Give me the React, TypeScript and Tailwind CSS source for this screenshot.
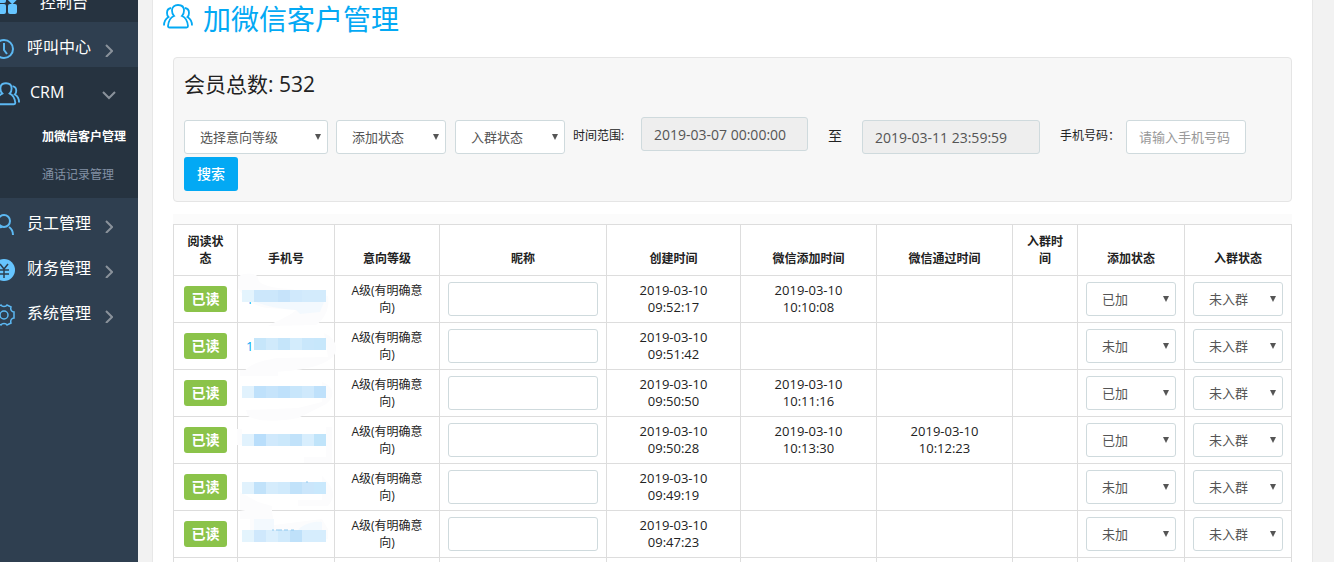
import React from 'react';

const menuIcon = 'shrink-0 fill-none stroke-[#5cb8f2] stroke-2';

const GridIcon = () => (
  <svg width="26" height="24" viewBox="0 0 26 24" className="shrink-0 fill-[#66c5ff]">
    <rect x="4" y="2" width="10" height="9" rx="2" />
    <rect x="4" y="12" width="10" height="10" rx="2" />
    <rect x="16" y="12" width="9" height="10" rx="2" />
    <rect x="17" y="3" width="8" height="8" rx="1" transform="rotate(45 21 6)" />
  </svg>
);

const ClockIcon = () => (
  <svg width="24" height="24" viewBox="0 0 24 24" className={menuIcon}>
    <circle cx="12" cy="12" r="9" />
    <path d="M12 6v7l3 4" />
  </svg>
);

const TeamPaths = () => (
  <>
    <path d="M11 12C9.5 10.500 9 8.500 9 6.500 9 3 11.500 1 15 1s6 2 6 5.500c0 2-.5 4-2 5.500 3.500 1.500 5.500 5 6 10 0 1-.5 1.500-1.500 1.500h-17C5.500 23.500 5 23 5 22c.5-5 2.500-8.500 6-10z" />
    <path d="M8 4C5 4.500 4 6.500 4 9c0 1.500.5 3 1.500 4C3 14.500 1 18 1 21.500" />
    <path d="M22 4c3 .5 4 2.500 4 5 0 1.500-.5 3-1.500 4 2.500 1.500 4.500 5 4.500 8.500" />
  </>
);

const TeamIcon = () => (
  <svg width="28" height="24" viewBox="0 0 30 25" className={menuIcon}>
    <TeamPaths />
  </svg>
);

const UserIcon = () => (
  <svg width="24" height="24" viewBox="0 0 24 24" className={menuIcon}>
    <circle cx="12" cy="8" r="6" />
    <path d="M3 21c0-4 3-7 7-7M17 14c3 2 4 4 4 8" />
  </svg>
);

const YenIcon = () => (
  <svg width="24" height="24" viewBox="0 0 24 24" className="shrink-0">
    <circle cx="12" cy="12" r="11" className="fill-[#66c5ff]" />
    <path d="M8 6l4 5 4-5M12 11v9M7 12h10M7 16h10" className="fill-none stroke-[#2c3e50]" strokeWidth="1.5" />
  </svg>
);

const GearIcon = () => (
  <svg width="24" height="24" viewBox="0 0 24 24" className="shrink-0 fill-none stroke-[#5cb8f2]" strokeWidth="1.5">
    <circle cx="12" cy="12" r="4" />
    <path d="M9 2c1 2 5 2 6 0l4 2c-1 3 1 5 3 5v6c-2 0-4 2-3 5l-4 2c-1-2-5-2-6 0l-4-2c1-3-1-5-3-5V9c2 0 4-2 3-5z" />
  </svg>
);

const ChevronRight = () => (
  <svg width="8" height="16" viewBox="0 0 8 16" className="fill-none stroke-[#8a929b] stroke-2">
    <path d="M1 4l6 6-6 6" />
  </svg>
);

const ChevronDown = () => (
  <svg width="14" height="16" viewBox="0 0 14 16" className="fill-none stroke-[#8a929b] stroke-2">
    <path d="M1 6l6 6 6-6" />
  </svg>
);

type MenuItemProps = {
  icon: React.ReactNode;
  label: string;
  className?: string;
  arrow?: React.ReactNode;
};

const MenuItem = ({ icon, label, className = 'gap-[11px] pr-[25px]', arrow }: MenuItemProps) => (
  <a href="#" className={`-ml-2 flex h-[45px] items-center pt-2 text-base text-white ${className}`}>
    {icon}
    <span className="flex-1 pb-[3px]">{label}</span>
    {arrow}
  </a>
);

const Sidebar = () => (
  <nav className="w-[138px] shrink-0 overflow-hidden bg-[#2f3f50]">
    <div className="-mt-[23px] bg-[#263340]">
      <MenuItem icon={<GridIcon />} label="控制台" className="gap-[22px]" />
    </div>
    <MenuItem icon={<ClockIcon />} label="呼叫中心" arrow={<ChevronRight />} />
    <div className="bg-[#263340] pb-1">
      <MenuItem icon={<TeamIcon />} label="CRM" className="gap-[10px] pr-[22px]" arrow={<ChevronDown />} />
      <ul className="pt-[6px] text-xs leading-[38px]">
        <li>
          <a href="#" className="block pl-[42px] font-bold whitespace-nowrap text-white">加微信客户管理</a>
        </li>
        <li>
          <a href="#" className="block pl-[42px] whitespace-nowrap text-[#8391a5]">通话记录管理</a>
        </li>
      </ul>
    </div>
    <MenuItem icon={<UserIcon />} label="员工管理" arrow={<ChevronRight />} />
    <MenuItem icon={<YenIcon />} label="财务管理" arrow={<ChevronRight />} />
    <MenuItem icon={<GearIcon />} label="系统管理" arrow={<ChevronRight />} />
  </nav>
);

type SelectProps = {
  label: string;
  value: string;
  options: string[];
  className: string;
};

const Select = ({ label, value, options, className }: SelectProps) => (
  <div className={`relative ${className}`}>
    <select
      aria-label={label}
      defaultValue={value}
      className="block h-[34px] w-full appearance-none rounded-[3px] border border-[#cfdadd] bg-white pt-px pl-[15px] text-[13px] text-[#555]"
    >
      {options.map((option) => (
        <option key={option}>{option}</option>
      ))}
    </select>
    <svg width="6" height="6" viewBox="0 0 6 6" className="pointer-events-none absolute top-[14px] right-[7px] fill-[#555]">
      <path d="M0 0h6L3 6z" />
    </svg>
  </div>
);

const field = 'block h-[34px] rounded-[3px] border border-[#cfdadd] px-3 text-[#555]';

const Filters = () => (
  <form className="rounded border border-[#e5e5e5] bg-[#f7f7f7] p-[10px]">
    <h3 className="text-[21px] leading-8 text-[#222]">会员总数: 532</h3>
    <div className="mt-[17px] flex h-[37px] items-end">
      <Select label="选择意向等级" value="选择意向等级" options={['选择意向等级']} className="mr-2 w-36" />
      <Select label="添加状态" value="添加状态" options={['添加状态', '已加', '未加']} className="mr-[9px] w-[110px]" />
      <Select label="入群状态" value="入群状态" options={['入群状态', '未入群']} className="mr-2 w-[110px]" />
      <label htmlFor="start" className="mr-4 w-[52px] self-center whitespace-nowrap">时间范围:</label>
      <input id="start" readOnly defaultValue="2019-03-07 00:00:00" className={`${field} w-[167px] self-start bg-[#eee] text-sm`} />
      <label htmlFor="end" className="mx-5 self-center text-sm">至</label>
      <input id="end" readOnly defaultValue="2019-03-11 23:59:59" className={`${field} w-[178px] bg-[#eee] text-sm`} />
      <label htmlFor="phone" className="ml-5 w-[66px] self-center whitespace-nowrap">手机号码：</label>
      <input id="phone" placeholder="请输入手机号码" className={`${field} w-[120px] bg-white text-[13px] placeholder:text-[#999]`} />
    </div>
    <button type="button" className="mt-[3px] block h-[34px] rounded-[3px] bg-[#03a9f4] px-[13px] text-sm font-medium text-white">
      搜索
    </button>
  </form>
);

// coordinates start at the top left corner of the phone cell
const masks = [
  {
    first: '1',
    y: 14,
    fills: ['#e4f4fd', '#cce7fb', '#cce7fb', '#c6e3fa', '#d0e9fc', '#d3ebfc', '#d3ebfc'],
    smear: 'M0 2C0-3 20-4 20 2C20 9 34 12 52 13L90 20C92 30 88 42 78 49L30 50C40 44 52 40 58 34L30 32C14 30 6 22 0 12Z',
    tint: 'M18 26C30 31 44 33 58 34L62 38 82 36 86 26Z',
  },
  {
    first: '1',
    y: 15,
    fills: ['', '#c6e6fa', '#d0eafb', '#c5e5fa', '#d3ecfc', '#c9e7fb', '#c7e7fb'],
    smear: 'M86 10C96 14 102 24 95 34C82 44 70 48 4 51C10 42 20 38 40 35L90 34Z',
  },
  {
    y: 16,
    fills: ['#e1f2fd', '#bfe1fb', '#c6e4fb', '#bfe1fb', '#c8e6fb', '#cfe9fc', '#bfe1fb'],
    smear: 'M2 0H40V6H2ZM84 12C96 16 98 26 88 34L60 48C40 52 20 52 10 46L8 40L60 38L84 32Z',
  },
  {
    y: 17,
    fills: ['#e1f2fd', '#b9defb', '#d0e9fc', '#cbe8fb', '#c1e2fa', '#d8eefd', '#c0e4fa'],
    smear: 'M-1 12H4V28H-1ZM88 10H94V46H66V40H88Z',
  },
  {
    y: 18,
    fills: ['#e1f2fd', '#c1e2fa', '#d5ecfc', '#d0eafc', '#c1e2fa', '#cbe6fb', '#c9e8fc'],
    smear: 'M84 12C94 22 100 30 90 42H60V36H84ZM2 28V46L34 52V42L20 38Z',
    dots: 'M68 18h2',
  },
  {
    y: 19,
    fills: ['#e4f4fd', '#cfe8fc', '#dbeffd', '#d0eafc', '#bfe1fa', '#d6edfd', '#d6edfd'],
    smear: 'M2 0H34L36 14L84 8L90 18V28H84V19H12V8H2Z',
    tint: 'M16 8H36V19H16ZM60 19C66 12 78 10 84 11V19Z',
    dots: 'M34 19h2m2 0h6m2 0h4m3 0h3',
  },
];

const rows = [
  { created: ['2019-03-10', '09:52:17'], added: ['2019-03-10', '10:10:08'], passed: [], status: '已加' },
  { created: ['2019-03-10', '09:51:42'], added: [], passed: [], status: '未加' },
  { created: ['2019-03-10', '09:50:50'], added: ['2019-03-10', '10:11:16'], passed: [], status: '已加' },
  { created: ['2019-03-10', '09:50:28'], added: ['2019-03-10', '10:13:30'], passed: ['2019-03-10', '10:12:23'], status: '已加' },
  { created: ['2019-03-10', '09:49:19'], added: [], passed: [], status: '未加' },
  { created: ['2019-03-10', '09:47:23'], added: [], passed: [], status: '未加' },
];

const columns = [
  { title: '阅读状态', width: 'w-[64px]' },
  { title: '手机号', width: 'w-[97px]' },
  { title: '意向等级', width: 'w-[105px]' },
  { title: '昵称', width: 'w-[167px]' },
  { title: '创建时间', width: 'w-[134px]' },
  { title: '微信添加时间', width: 'w-[136px]' },
  { title: '微信通过时间', width: 'w-[136px]' },
  { title: '入群时间', width: 'w-[65px]' },
  { title: '添加状态', width: 'w-[107px]' },
  { title: '入群状态', width: 'w-[107px]' },
];

const cell = 'border border-[#ddd] px-2 py-[6px]';

const DateCell = ({ parts }: { parts: string[] }) => (
  <td className={`${cell} text-[13px]`}>
    {parts.map((part) => (
      <span key={part} className="block">{part}</span>
    ))}
  </td>
);

const PhoneCell = ({ mask }: { mask: (typeof masks)[number] }) => (
  <td className={`${cell} relative text-left`}>
    <a href="#" className="text-[13px] text-[#03a9f4]">{mask.first}</a>
    <svg width="97" height="47" viewBox="0 0 97 47" className="pointer-events-none absolute top-0 left-0 overflow-visible">
      <path d={mask.smear} className="fill-[#fcfcfd]" />
      {mask.tint && <path d={mask.tint} className="fill-[#f3f9fe]" />}
      {mask.fills.map((fill, i) =>
        fill ? <rect key={i} x={4 + i * 12} y={mask.y} width="12" height="12" fill={fill} /> : null
      )}
      {mask.dots && <path d={mask.dots} className="stroke-[#8fc8ee]" />}
    </svg>
  </td>
);

const MemberTable = () => (
  <table className="w-full table-fixed border-collapse text-center leading-[17px]">
    <colgroup>
      {columns.map((column) => (
        <col key={column.title} className={column.width} />
      ))}
    </colgroup>
    <thead>
      <tr>
        {columns.map((column) => (
          <th key={column.title} className="border border-[#ddd] px-3 py-2 align-bottom font-bold">{column.title}</th>
        ))}
      </tr>
    </thead>
    <tbody>
      {rows.map((row, i) => (
        <tr key={row.created[1]} className="h-[47px]">
          <td className={cell}>
            <button type="button" className="h-[26px] w-[43px] rounded-[3px] bg-[#8bc34a] text-sm font-bold text-white">
              已读
            </button>
          </td>
          <PhoneCell mask={masks[i]} />
          <td className={cell}>
            A级(有明确意
            <br />
            向)
          </td>
          <td className={cell}>
            <input aria-label="昵称" className={`${field} w-full bg-white text-[13px]`} />
          </td>
          <DateCell parts={row.created} />
          <DateCell parts={row.added} />
          <DateCell parts={row.passed} />
          <td className={cell}></td>
          <td className={cell}>
            <Select label="添加状态" value={row.status} options={['已加', '未加']} className="w-full" />
          </td>
          <td className={cell}>
            <Select label="入群状态" value="未入群" options={['未入群']} className="w-full" />
          </td>
        </tr>
      ))}
      <tr className="h-[47px]">
        {columns.map((column) => (
          <td key={column.title} className={cell}></td>
        ))}
      </tr>
    </tbody>
  </table>
);

export default function App() {
  return (
    <div className="flex h-screen overflow-hidden bg-[#f2f2f2] font-['Open_Sans','Noto_Sans_CJK_SC',sans-serif] text-xs text-[#222]">
      <Sidebar />
      <main className="mr-[21px] ml-[14px] min-w-0 flex-1 border-x border-[#e7e7e7] bg-white px-5">
        <h1 className="-ml-[10px] flex h-10 items-center gap-[10px] text-[28px] text-[#03a9f4]">
          <svg width="30" height="25" viewBox="0 0 30 25" className="mb-2 fill-none stroke-[#03a9f4]" strokeWidth="1.800">
            <TeamPaths />
          </svg>
          加微信客户管理
        </h1>
        <div className="mt-[17px]">
          <Filters />
        </div>
        <div className="mt-3 bg-[#fbfbfb] pt-[10px]">
          <div className="bg-white">
            <MemberTable />
          </div>
        </div>
      </main>
    </div>
  );
}
